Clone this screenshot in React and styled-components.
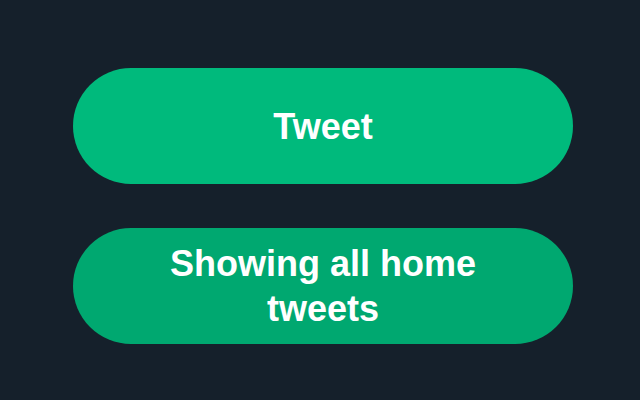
import React from "react";
import styled, { createGlobalStyle } from "styled-components";

const GlobalStyle = createGlobalStyle`
  html, body {
    margin: 0;
    padding: 0;
    background-color: #15202b;
  }
  body {
    font-family: "Liberation Sans", Arial, sans-serif;
  }
`;

const Page = styled.div`
  width: 640px;
  height: 400px;
  box-sizing: border-box;
  padding: 68px 0 0 73px;
  display: flex;
  flex-direction: column;
  gap: 44px;
  background-color: #15202b;
`;

const PillButton = styled.button`
  width: 500px;
  height: 116px;
  box-sizing: border-box;
  padding: 0 80px;
  border: none;
  border-radius: 58px;
  background-color: ${(p) => (p.$dim ? "#00a870" : "#00ba7c")};
  color: #ffffff;
  font-family: "Liberation Sans", Arial, sans-serif;
  font-weight: 700;
  font-size: 36px;
  line-height: 45px;
  text-align: center;
  display: flex;
  align-items: center;
  justify-content: center;
  cursor: pointer;
`;

const App = () => {
  return (
    <React.Fragment>
      <GlobalStyle />
      <Page>
        <PillButton>Tweet</PillButton>
        <PillButton $dim>Showing all home tweets</PillButton>
      </Page>
    </React.Fragment>
  );
};

export default App;
